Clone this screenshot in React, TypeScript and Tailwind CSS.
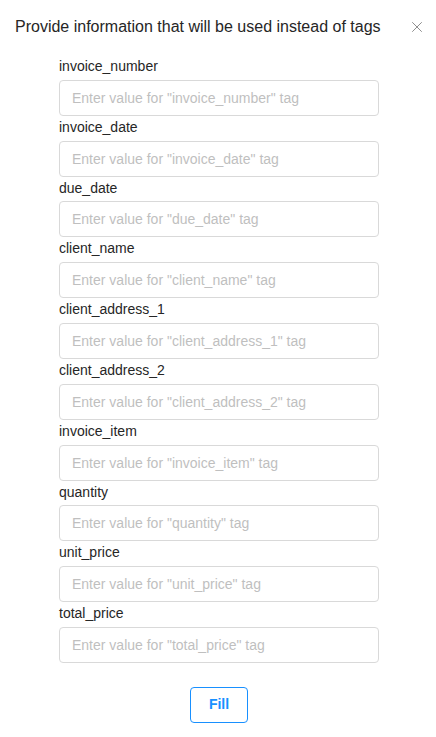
import { X } from 'lucide-react';

const tags = [
  'invoice_number',
  'invoice_date',
  'due_date',
  'client_name',
  'client_address_1',
  'client_address_2',
  'invoice_item',
  'quantity',
  'unit_price',
  'total_price',
];

export default function App() {
  return (
    <div className="w-[436px] h-[737px] bg-white font-['Liberation_Sans',Arial,sans-serif] text-[#262626]">
      <div className="flex items-center justify-between pl-[15px] pr-[10px] pt-[16px]">
        <h1 className="text-[16px] leading-[22px] whitespace-nowrap">
          Provide information that will be used instead of tags
        </h1>
        <button className="text-[#8c8c8c]">
          <X className="h-[18px] w-[18px]" strokeWidth={1.3} />
        </button>
      </div>

      <form className="ml-[59px] mt-[17px] w-[320px] flex flex-col">
        {tags.map((tag) => (
          <div key={tag} className="flex flex-col">
            <label className="text-[14px] leading-[22.8px] mb-[2px]">{tag}</label>
            <input
              className="h-[36px] w-full rounded-[4px] border border-[#d9d9d9] px-[12px] text-[14px] outline-none placeholder:text-[#bfbfbf]"
              placeholder={`Enter value for "${tag}" tag`}
            />
          </div>
        ))}
        <div className="flex justify-center mt-[24px]">
          <button
            type="button"
            className="h-[36px] w-[58px] rounded-[4px] border border-[#1890ff] text-[14px] font-bold text-[#1890ff]"
          >
            Fill
          </button>
        </div>
      </form>
    </div>
  );
}
